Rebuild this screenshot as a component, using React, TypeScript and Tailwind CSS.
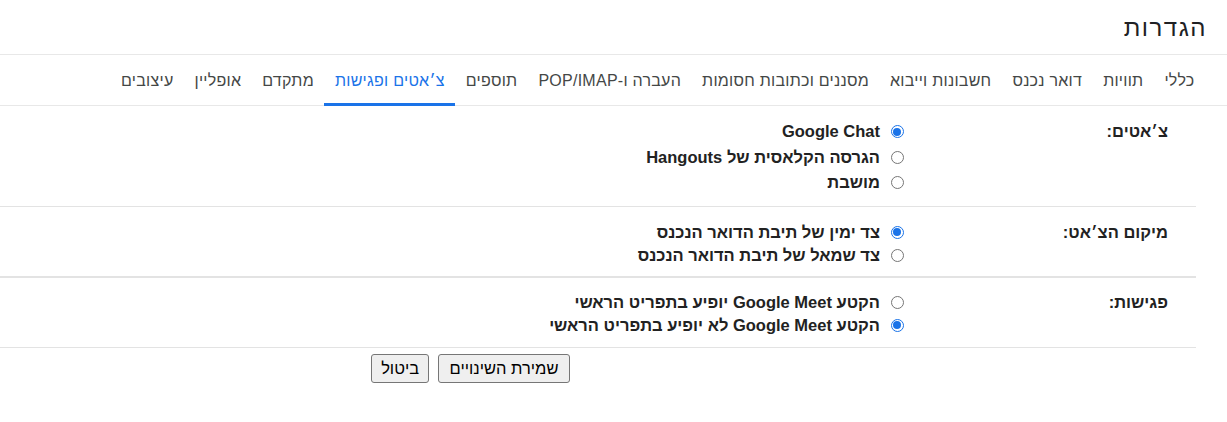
import React from "react";

const tabs = [
  "כללי",
  "תוויות",
  "דואר נכנס",
  "חשבונות וייבוא",
  "מסננים וכתובות חסומות",
  "העברה ו-POP/IMAP",
  "תוספים",
  "צ׳אטים ופגישות",
  "מתקדם",
  "אופליין",
  "עיצובים",
];

function Radio({ checked, label, h }: { checked?: boolean; label: React.ReactNode; h: string }) {
  return (
    <div className={"flex items-center " + h}>
      <span
        className={
          checked
            ? "w-[13px] h-[13px] rounded-full border border-[#1a73e8] flex items-center justify-center ml-[10.5px] mr-[3.5px]"
            : "w-[13px] h-[13px] rounded-full border border-[#767676] flex items-center justify-center ml-[10.5px] mr-[3.5px]"
        }
      >
        {checked ? <span className="w-[8px] h-[8px] rounded-full bg-[#1a73e8]" /> : null}
      </span>
      <span className="font-bold text-[16.5px] text-[#222]">{label}</span>
    </div>
  );
}

function Section({
  label,
  children,
  cls,
  h,
}: {
  label: string;
  children: React.ReactNode;
  cls: string;
  h: string;
}) {
  return (
    <div className={"flex " + cls}>
      <div className="w-[289px] pr-[28px]">
        <div className={"flex items-center font-bold text-[16.5px] text-[#222] " + h}>{label}</div>
      </div>
      <div className="flex flex-col">{children}</div>
    </div>
  );
}

export default function App() {
  return (
    <div
      dir="rtl"
      className="w-[1227px] h-[422px] bg-white overflow-hidden font-['Liberation_Sans',Arial,sans-serif]"
    >
      <div className="h-[54px] flex items-center pr-[20px] pt-[2px] text-[24px] tracking-[1.5px] text-[#202124]">
        הגדרות
      </div>
      <div className="h-[52px] border-t border-b border-[#e8e8e8] flex items-stretch pr-[22px]">
        {tabs.map((t, i) => {
          const active = i === 7;
          return (
            <div
              key={t}
              className={
                active
                  ? "px-[10.5px] flex items-center text-[16px] tracking-[0.26px] text-[#1a73e8] border-b-[3px] border-[#1a73e8] pt-[4px] -mb-[1px]"
                  : "px-[10.5px] flex items-center text-[16px] tracking-[0.26px] text-[#444746] border-b-[3px] border-transparent pt-[4px] -mb-[1px]"
              }
            >
              {t}
            </div>
          );
        })}
      </div>
      <div className="mr-[31px]">
        <Section label="צ׳אטים:" cls="border-b border-[#e3e3e3] pt-[13px] pb-[10px]" h="h-[25.5px]">
          <Radio h="h-[25.5px]" checked label="Google Chat" />
          <Radio h="h-[25.5px]" label="הגרסה הקלאסית של Hangouts" />
          <Radio h="h-[25.5px]" label="מושבת" />
        </Section>
        <Section label="מיקום הצ׳אט:" cls="border-b-2 border-[#e3e3e3] pt-[14px] pb-[9px]" h="h-[23px]">
          <Radio h="h-[23px]" checked label="צד ימין של תיבת הדואר הנכנס" />
          <Radio h="h-[23px]" label="צד שמאל של תיבת הדואר הנכנס" />
        </Section>
        <Section label="פגישות:" cls="border-b border-[#e3e3e3] pt-[13px] pb-[10px]" h="h-[23px]">
          <Radio h="h-[23px]" label="הקטע Google Meet יופיע בתפריט הראשי" />
          <Radio h="h-[23px]" checked label="הקטע Google Meet לא יופיע בתפריט הראשי" />
        </Section>
        <div className="flex gap-[9px] pt-[6px] pr-[626px]">
          <button className="h-[29px] px-[10.5px] bg-[#efefef] border border-[#767676] rounded-[3px] text-[16.5px] text-black">
            שמירת השינויים
          </button>
          <button className="h-[29px] px-[9px] bg-[#efefef] border border-[#767676] rounded-[3px] text-[16.5px] text-black">
            ביטול
          </button>
        </div>
      </div>
    </div>
  );
}
